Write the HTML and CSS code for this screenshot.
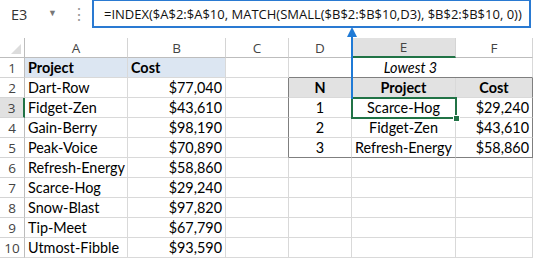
FILE: index.html
```html
<!DOCTYPE html>
<html lang="en">
<head>
  <meta charset="UTF-8">
  <title>INDEX MATCH SMALL</title>
  <link rel="stylesheet" href="styles.css">
</head>
<body>
  <div class="formula-bar">
    <div class="name-box">
      <span class="cell-ref">E3</span>
      <span class="drop">&#9660;</span>
    </div>
    <div class="dots">&#8942;</div>
    <div class="formula">=INDEX($A$2:$A$10, MATCH(SMALL($B$2:$B$10,D3), $B$2:$B$10, 0))</div>
  </div>

  <div class="sheet">
    <div class="grid">
      <!-- column headers -->
      <div class="hd corner"><span class="tri"></span></div>
      <div class="hd">A</div>
      <div class="hd">B</div>
      <div class="hd">C</div>
      <div class="hd">D</div>
      <div class="hd hd-sel">E</div>
      <div class="hd">F</div>

      <!-- 1 -->
      <div class="rh">1</div>
      <div class="c blue b">Project</div>
      <div class="c blue b">Cost</div>
      <div class="c"></div>
      <div class="c span3 ctr i tb-top">Lowest 3</div>

      <!-- 2 -->
      <div class="rh">2</div>
      <div class="c">Dart-Row</div>
      <div class="c num">$77,040</div>
      <div class="c tb-left"></div>
      <div class="c gray ctr b">N</div>
      <div class="c gray ctr b">Project</div>
      <div class="c gray ctr b tb-right">Cost</div>

      <!-- 3 -->
      <div class="rh rh-sel">3</div>
      <div class="c">Fidget-Zen</div>
      <div class="c num">$43,610</div>
      <div class="c tb-left"></div>
      <div class="c ctr">1</div>
      <div class="c ctr">Scarce-Hog</div>
      <div class="c num tb-right">$29,240</div>

      <!-- 4 -->
      <div class="rh">4</div>
      <div class="c">Gain-Berry</div>
      <div class="c num">$98,190</div>
      <div class="c tb-left"></div>
      <div class="c ctr">2</div>
      <div class="c ctr">Fidget-Zen</div>
      <div class="c num tb-right">$43,610</div>

      <!-- 5 -->
      <div class="rh">5</div>
      <div class="c">Peak-Voice</div>
      <div class="c num">$70,890</div>
      <div class="c tb-left"></div>
      <div class="c ctr tb-bottom">3</div>
      <div class="c ctr tb-bottom">Refresh-Energy</div>
      <div class="c num tb-right tb-bottom">$58,860</div>

      <!-- 6 -->
      <div class="rh">6</div>
      <div class="c">Refresh-Energy</div>
      <div class="c num">$58,860</div>
      <div class="c"></div>
      <div class="c"></div>
      <div class="c"></div>
      <div class="c"></div>

      <!-- 7 -->
      <div class="rh">7</div>
      <div class="c">Scarce-Hog</div>
      <div class="c num">$29,240</div>
      <div class="c"></div>
      <div class="c"></div>
      <div class="c"></div>
      <div class="c"></div>

      <!-- 8 -->
      <div class="rh">8</div>
      <div class="c">Snow-Blast</div>
      <div class="c num">$97,820</div>
      <div class="c"></div>
      <div class="c"></div>
      <div class="c"></div>
      <div class="c"></div>

      <!-- 9 -->
      <div class="rh">9</div>
      <div class="c">Tip-Meet</div>
      <div class="c num">$67,790</div>
      <div class="c"></div>
      <div class="c"></div>
      <div class="c"></div>
      <div class="c"></div>

      <!-- 10 -->
      <div class="rh">10</div>
      <div class="c">Utmost-Fibble</div>
      <div class="c num">$93,590</div>
      <div class="c"></div>
      <div class="c"></div>
      <div class="c"></div>
      <div class="c"></div>
    </div>

    <!-- active cell E3 -->
    <div class="selection"><span class="handle"></span></div>

    <!-- arrow from E3 up to the formula -->
    <svg class="arrow" width="16" height="72" viewBox="0 0 16 72">
      <line x1="8" y1="8" x2="8" y2="72" stroke="#1f7ad6" stroke-width="2"/>
      <polygon points="8,0 3,10 13,10" fill="#1f7ad6"/>
    </svg>
  </div>
</body>
</html>
```

FILE: styles.css
```css
body {
  margin: 0;
  font-family: "Lato", "Open Sans", sans-serif;
  background: #fff;
  color: #000;
  width: 533px;
  height: 258px;
  overflow: hidden;
  position: relative;
}

/* formula bar */
.formula-bar {
  display: flex;
  align-items: stretch;
  height: 28px;
}

.name-box {
  width: 66px;
  display: flex;
  align-items: center;
  justify-content: space-between;
  padding: 0 9px 0 11px;
  box-sizing: border-box;
  color: #333;
  font-family: "Open Sans", sans-serif;
  font-size: 14.5px;
}

.drop {
  font-size: 9px;
  color: #777;
  margin-top: -4px;
}

.dots {
  width: 26px;
  display: flex;
  align-items: center;
  justify-content: center;
  color: #999;
  font-size: 16px;
}

.formula {
  flex: 1;
  margin-right: 2px;
  border: 2px solid #2a7ad2;
  border-top-width: 1px;
  display: flex;
  align-items: center;
  padding-left: 10px;
  font-family: "Open Sans", sans-serif;
  font-size: 13px;
  color: #111;
  white-space: nowrap;
  overflow: hidden;
}

/* sheet */
.sheet {
  position: relative;
  margin-top: 10px;
}

.grid {
  display: grid;
  grid-template-columns: 25px 103px 98px 63px 63px 104px 77px;
  grid-auto-rows: 20px;
  font-size: 14.4px;
}

.grid > div {
  box-sizing: border-box;
  display: flex;
  align-items: center;
  white-space: nowrap;
}

.hd {
  justify-content: center;
  color: #444;
  border-right: 1px solid #d4d4d4;
  border-bottom: 1px solid #bdbdbd;
  font-family: "Open Sans", sans-serif;
  font-size: 13.5px;
}

.hd-sel {
  background: #e1e1e1;
  border-bottom: 2px solid #217346;
}

.corner {
  position: relative;
  border-right: 1px solid #bdbdbd;
}

.tri {
  position: absolute;
  right: 3px;
  bottom: 3px;
  width: 0;
  height: 0;
  border-left: 10px solid transparent;
  border-bottom: 10px solid #dcdcdc;
}

.rh {
  justify-content: center;
  color: #444;
  border-right: 1px solid #bdbdbd;
  border-bottom: 1px solid #d4d4d4;
  font-family: "Open Sans", sans-serif;
  font-size: 13.5px;
}

.rh-sel {
  background: #e1e1e1;
  border-right: 2px solid #217346;
}

.c {
  padding: 0 3px;
  border-right: 1px solid #d9d9d9;
  border-bottom: 1px solid #d9d9d9;
}

.num {
  justify-content: flex-end;
}

.ctr {
  justify-content: center;
}

.b {
  font-weight: bold;
}

.i {
  font-style: italic;
}

.blue {
  background: #dce6f2;
}

.gray {
  background: #e2e2e2;
}

.span3 {
  grid-column: span 3;
}

/* table outline */
.tb-top {
  border-bottom: 1px solid #7f7f7f !important;
}

.tb-left {
  border-right: 1px solid #7f7f7f !important;
}

.tb-right {
  border-right: 1px solid #7f7f7f !important;
}

.tb-bottom {
  border-bottom: 1px solid #7f7f7f !important;
}

/* overlays */
.selection {
  position: absolute;
  left: 351px;
  top: 59px;
  width: 106px;
  height: 22px;
  border: 2px solid #217346;
  box-sizing: border-box;
}

.handle {
  position: absolute;
  right: -5px;
  bottom: -5px;
  width: 5px;
  height: 5px;
  background: #217346;
  border: 1px solid #fff;
}

.arrow {
  position: absolute;
  left: 344px;
  top: -11px;
}
```
